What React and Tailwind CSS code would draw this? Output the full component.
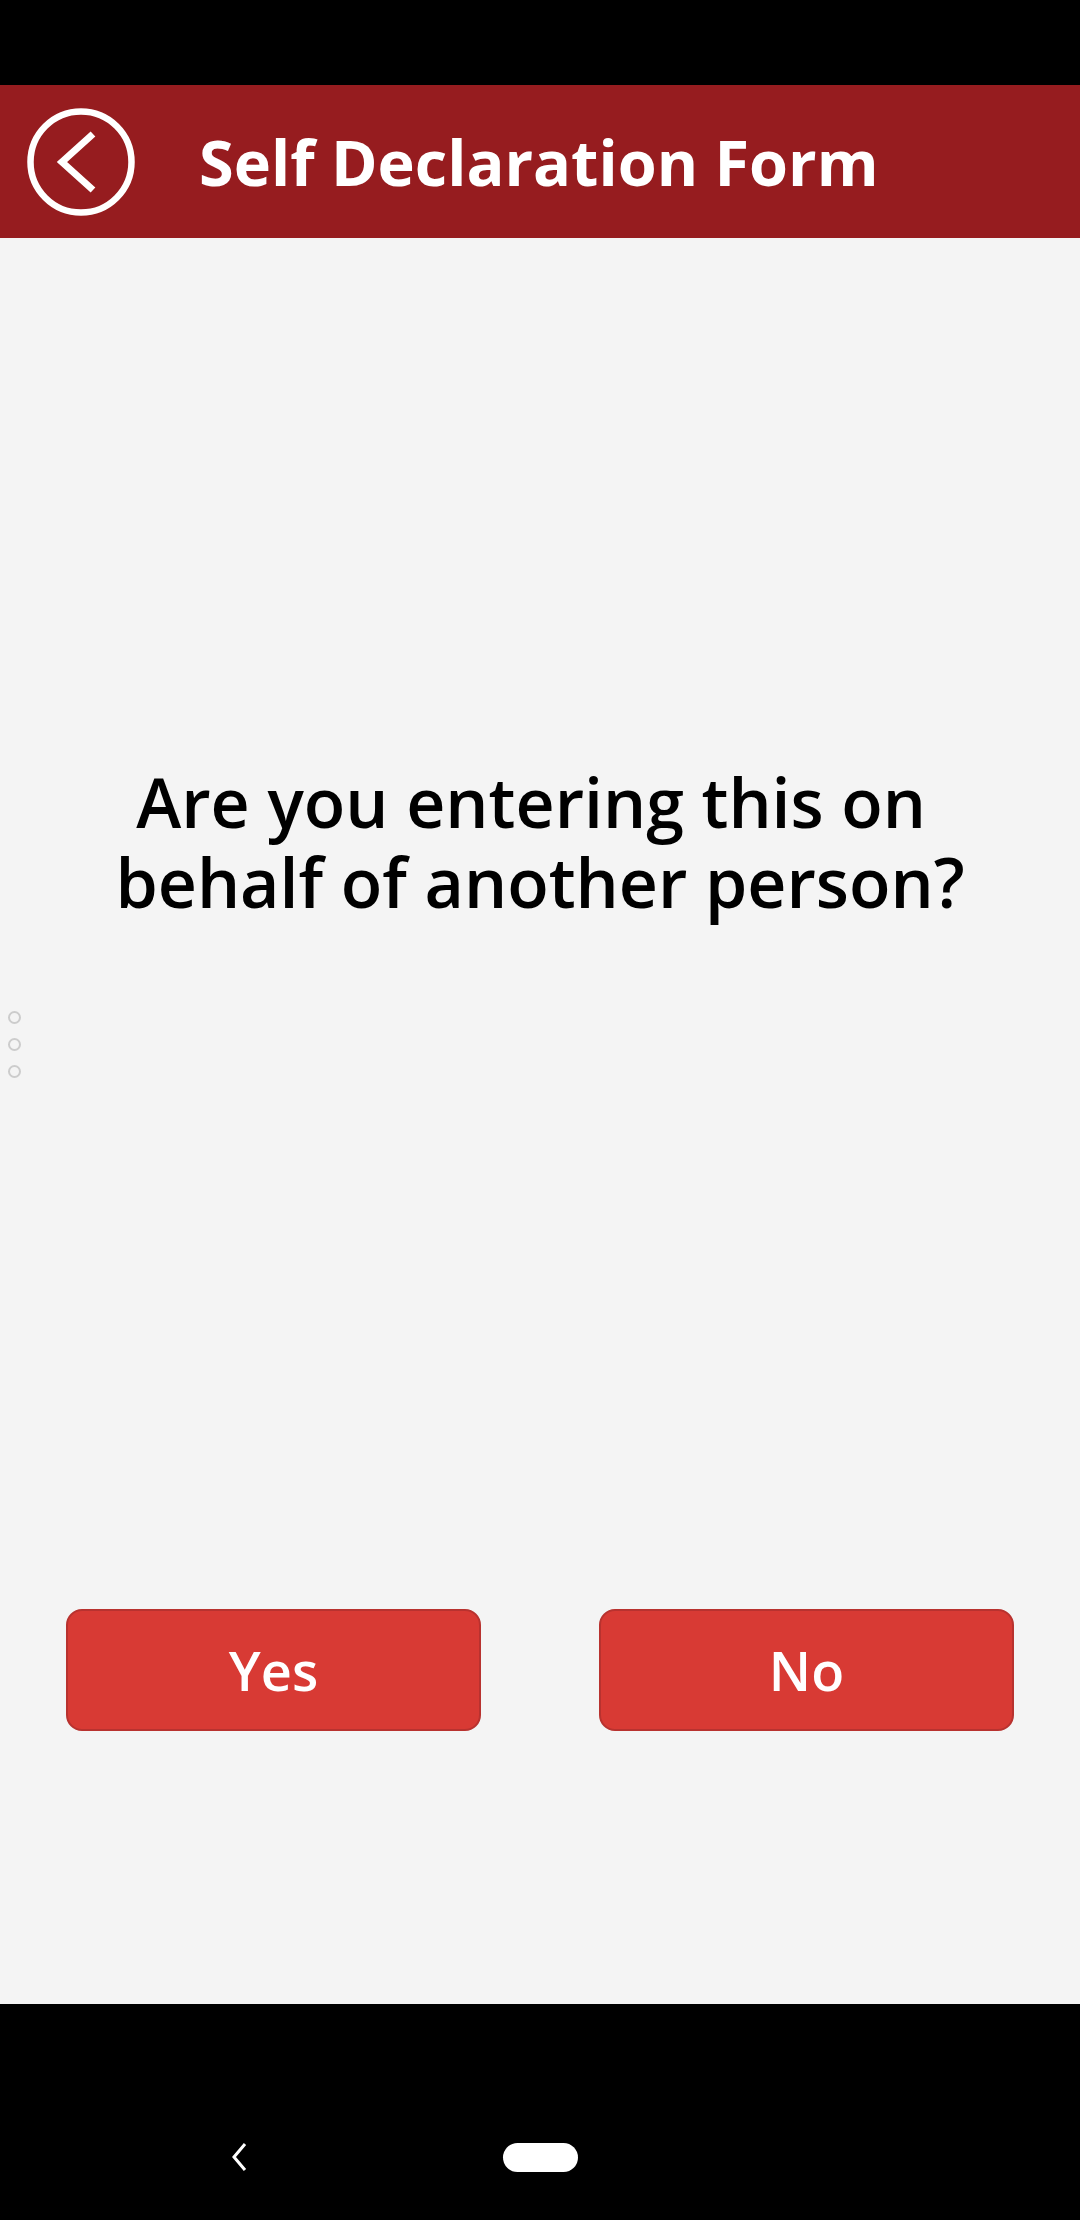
import React from "react";

function BackCircle() {
  return (
    <svg width="108" height="108" viewBox="0 0 108 108" fill="none">
      <circle cx="54" cy="54" r="50.5" stroke="white" strokeWidth="6.5" />
      <path d="M66 26 L35 54 L66 82" stroke="white" strokeWidth="7" strokeLinejoin="miter" />
    </svg>
  );
}

export default function App() {
  return (
    <div className="flex h-[2220px] w-[1080px] flex-col font-['Open_Sans',_'Noto_Sans',_sans-serif]">
      {/* status bar */}
      <div className="h-[85px] bg-black" />

      {/* header */}
      <header className="flex h-[153px] items-center bg-[#961c1f] pl-[27px]">
        <BackCircle />
        <h1 className="ml-[64px] text-[63px] font-bold leading-none text-white">
          Self Declaration Form
        </h1>
      </header>

      {/* content */}
      <main className="relative flex flex-1 flex-col items-center bg-[#f4f4f4] pt-[524px]">
        <div className="flex flex-col items-center text-[68px] font-semibold leading-[80px] text-black">
          <span>Are you entering this on&nbsp;</span>
          <span>behalf of another person?</span>
        </div>

        <div className="absolute left-[8px] top-[773px] flex flex-col gap-[14px]">
          <span className="h-[13px] w-[13px] rounded-full border-[2.5px] border-[#cccccc]" />
          <span className="h-[13px] w-[13px] rounded-full border-[2.5px] border-[#cccccc]" />
          <span className="h-[13px] w-[13px] rounded-full border-[2.5px] border-[#cccccc]" />
        </div>

        <div className="mt-[687px] flex w-full justify-between px-[66px]">
          <button className="h-[122px] w-[415px] rounded-[16px] border-[2px] border-[#b8322f] bg-[#d83a34] text-[54px] font-semibold text-white">
            Yes
          </button>
          <button className="h-[122px] w-[415px] rounded-[16px] border-[2px] border-[#b8322f] bg-[#d83a34] text-[54px] font-semibold text-white">
            No
          </button>
        </div>
      </main>

      {/* nav bar */}
      <div className="h-[216px] bg-black pt-[138px]">
        <div className="flex w-full items-center">
          <svg className="ml-[229px]" width="20" height="30" viewBox="0 0 20 30" fill="none">
            <path d="M16 2 L5 15 L16 28" stroke="white" strokeWidth="3" />
          </svg>
          <span className="ml-[254px] h-[29px] w-[75px] rounded-full bg-white" />
        </div>
      </div>
    </div>
  );
}
